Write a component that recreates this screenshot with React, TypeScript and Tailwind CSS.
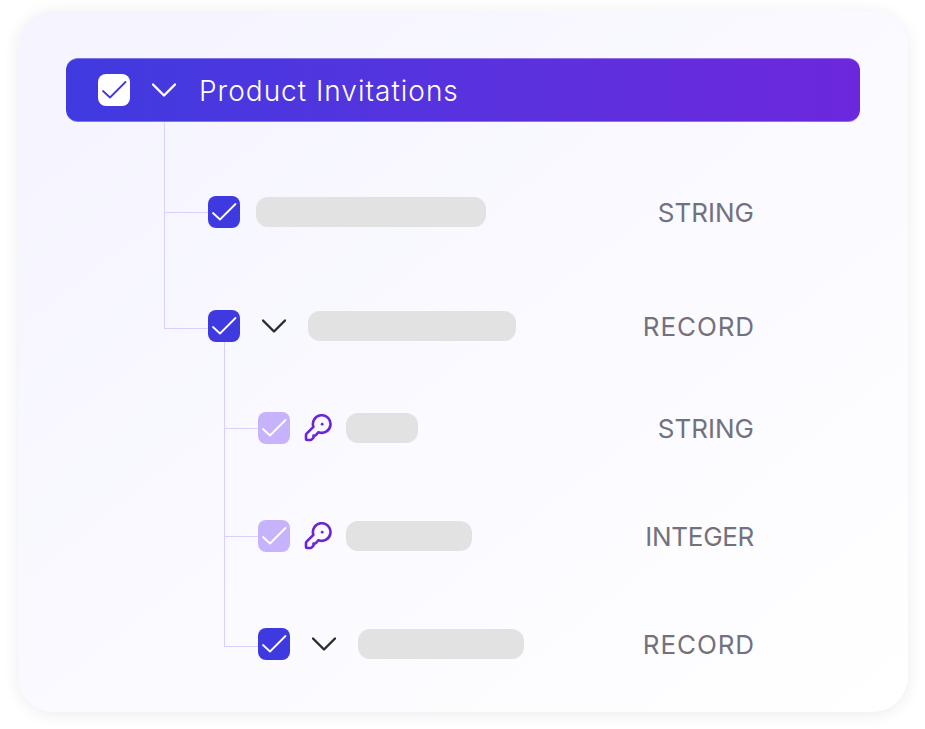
const fontStack = { fontFamily: '"Inter", "Liberation Sans", sans-serif' };

function Check({ color = "#ffffff" }: { color?: string }) {
  return (
    <svg width="32" height="32" viewBox="0 0 32 32" fill="none">
      <path
        d="M5 17 L12 23.5 L27.5 8"
        stroke={color}
        strokeWidth="1.8"
        strokeLinecap="round"
        strokeLinejoin="round"
      />
    </svg>
  );
}

function Chevron({ color }: { color: string }) {
  return (
    <svg width="24" height="14" viewBox="0 0 24 14" fill="none">
      <path
        d="M1 1.5 L12 12.5 L23 1.5"
        stroke={color}
        strokeWidth="2.4"
        strokeLinecap="round"
        strokeLinejoin="round"
      />
    </svg>
  );
}

function KeyIcon() {
  return (
    <svg className="ml-3.5 shrink-0" width="28" height="28" viewBox="0 0 28 28" fill="none">
      <path
        d="M14.5 18.2 A8.8 8.8 0 1 0 9.4 12.9 L2.6 19.7 Q2 20.3 2 21 V25 Q2 26 3 26 H6.5 Q7.3 26 7.8 25.4 L9.5 23.7 V21.5 H11.5 Z"
        stroke="#6a25d8"
        strokeWidth="2.6"
        strokeLinejoin="round"
      />
      <circle cx="18.2" cy="10.2" r="1.4" fill="#6a25d8" />
    </svg>
  );
}

function Box({ tone }: { tone: "solid" | "soft" | "white" }) {
  if (tone === "white") {
    return (
      <div className="h-8 w-8 shrink-0 rounded-lg bg-white">
        <Check color="#4338e0" />
      </div>
    );
  }
  return (
    <div
      className={
        tone === "solid"
          ? "h-8 w-8 shrink-0 rounded-lg bg-[#3f3ae0]"
          : "h-8 w-8 shrink-0 rounded-lg bg-[#c7b3fb]"
      }
    >
      <Check />
    </div>
  );
}

function Pill({ className }: { className: string }) {
  return <div className={"h-[30px] rounded-xl bg-[#e2e2e2] " + className} />;
}

export default function App() {
  return (
    <div className="h-[729px] w-[925px] overflow-hidden bg-white pt-[11px] pl-[18px]" style={fontStack}>
      <div className="h-[701px] w-[890px] rounded-[36px] bg-gradient-to-br from-[#f5f4ff] to-[#ffffff] px-12 pt-[47px] shadow-[0_2px_16px_rgba(40,40,60,0.09)]">
        <div className="flex h-16 w-[794px] items-center rounded-xl border-y border-white/30 bg-gradient-to-r from-[#3f3ae0] to-[#6c27dc] bg-origin-border pl-8">
          <Box tone="white" />
          <div className="ml-[22px]">
            <Chevron color="#ffffff" />
          </div>
          <span className="ml-[23px] pt-px text-[28px] font-light tracking-[1px] text-white">
            Product Invitations
          </span>
        </div>

        <div className="relative w-[794px] pt-[74px] pr-[106px]">
          <div className="absolute top-0 left-[98px] h-[207px] w-[1px] bg-[#d6d2ff]" />
          <div className="absolute top-[90px] left-[98px] h-[1px] w-[44px] bg-[#d6d2ff]" />

          <div className="flex h-8 items-center pl-[142px]">
            <Box tone="solid" />
            <Pill className="ml-4 w-[230px]" />
            <span className="ml-auto pt-px text-[26px] leading-8 text-[#72727e]">STRING</span>
          </div>

          <div className="relative mt-[82px] flex h-8 items-center pl-[142px]">
            <div className="absolute top-[18px] left-[98px] h-[1px] w-[44px] bg-[#d6d2ff]" />
            <Box tone="solid" />
            <div className="ml-[22px]">
              <Chevron color="#2b2b30" />
            </div>
            <Pill className="ml-[22px] w-[208px]" />
            <span className="ml-auto -mr-px pt-px text-[26px] leading-8 tracking-[0.9px] text-[#72727e]">RECORD</span>
          </div>

          <div className="absolute top-[220px] left-[158px] h-[305px] w-[1px] bg-[#d6d2ff]" />

          <div className="relative mt-[70px] flex h-8 items-center pl-[192px]">
            <div className="absolute top-4 left-[158px] h-[1px] w-[34px] bg-[#d6d2ff]" />
            <Box tone="soft" />
            <KeyIcon />
            <Pill className="ml-3.5 w-[72px]" />
            <span className="ml-auto pt-px text-[26px] leading-8 text-[#72727e]">STRING</span>
          </div>

          <div className="relative mt-[76px] flex h-8 items-center pl-[192px]">
            <div className="absolute top-4 left-[158px] h-[1px] w-[34px] bg-[#d6d2ff]" />
            <Box tone="soft" />
            <KeyIcon />
            <Pill className="ml-3.5 w-[126px]" />
            <span className="ml-auto pt-px text-[26px] leading-8 tracking-[-0.3px] text-[#72727e]">INTEGER</span>
          </div>

          <div className="relative mt-[76px] flex h-8 items-center pl-[192px]">
            <div className="absolute top-[18px] left-[158px] h-[1px] w-[34px] bg-[#d6d2ff]" />
            <Box tone="solid" />
            <div className="ml-[22px]">
              <Chevron color="#2b2b30" />
            </div>
            <Pill className="ml-[22px] w-[166px]" />
            <span className="ml-auto -mr-px pt-px text-[26px] leading-8 tracking-[0.9px] text-[#72727e]">RECORD</span>
          </div>
        </div>
      </div>
    </div>
  );
}
